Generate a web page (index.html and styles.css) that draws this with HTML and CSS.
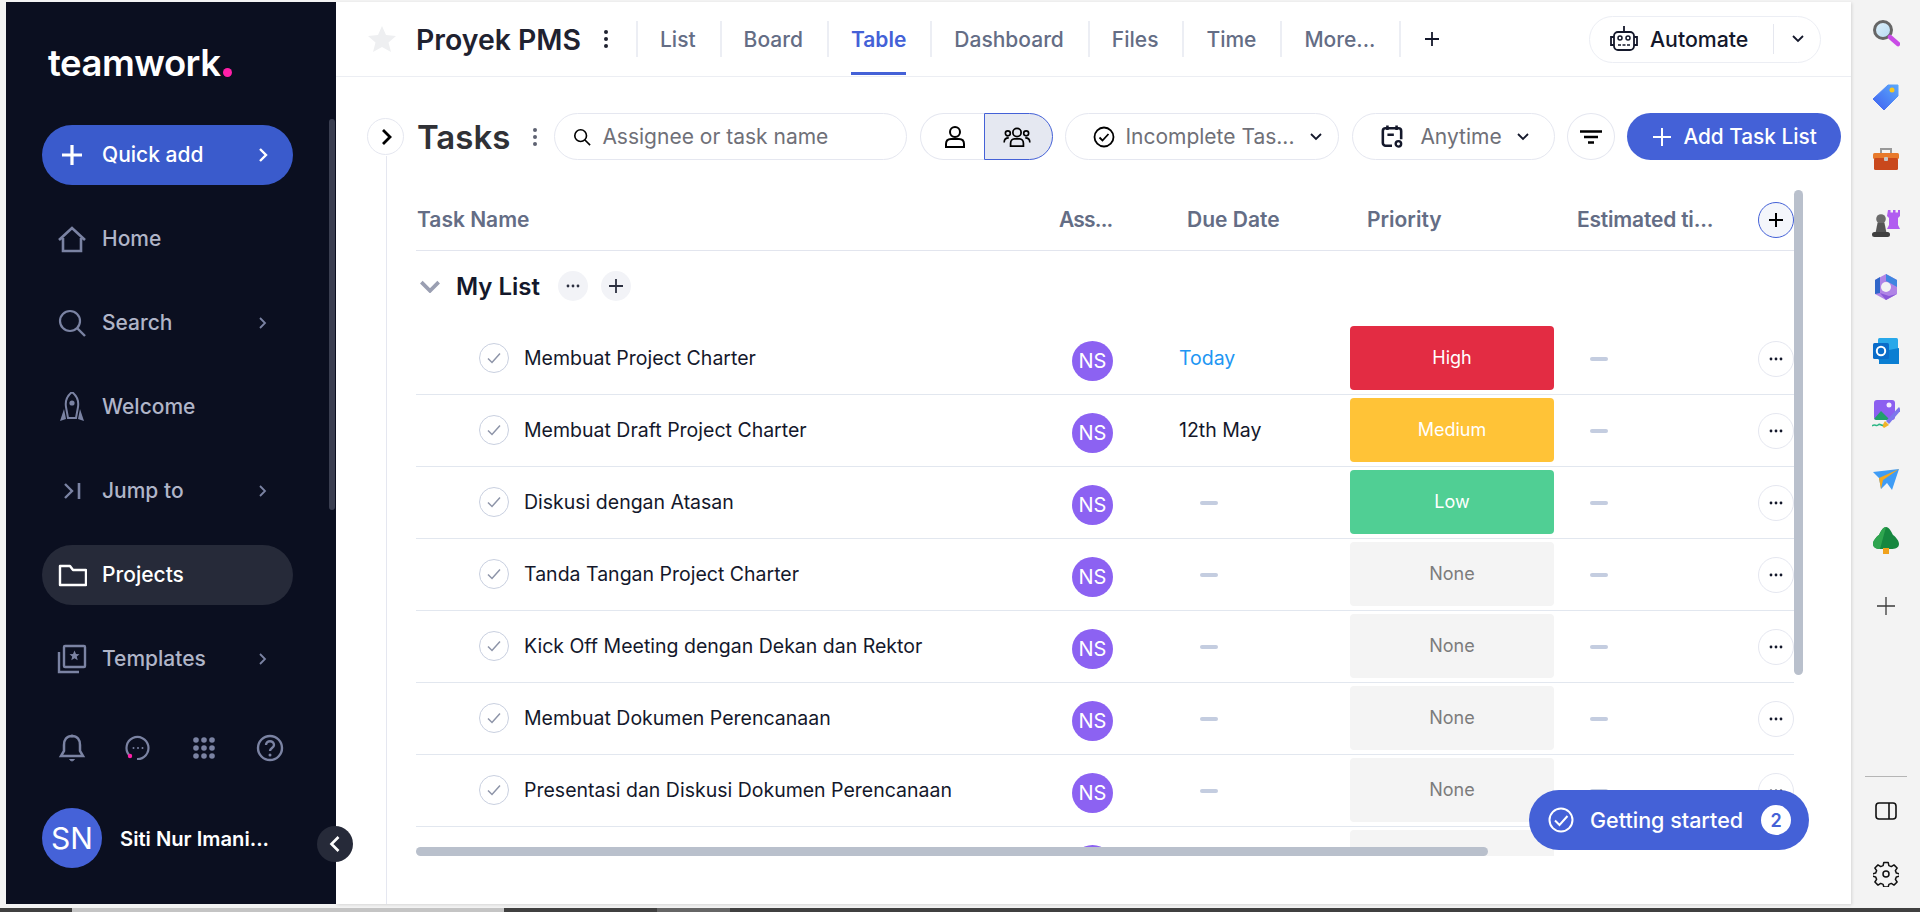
FILE: index.html
```html
<!DOCTYPE html>
<html lang="en">
<head>
<meta charset="utf-8">
<title>Proyek PMS - Table</title>
<link rel="stylesheet" href="styles.css">
</head>
<body>
<div class="app">
  <aside class="sidebar">
    <div class="logo">teamwork<span class="logo-dot"></span></div>
    <nav class="nav">
      <a class="nav-item quick">
        <svg class="nav-icon" viewBox="0 0 30 30"><path d="M15 5v20M5 15h20" stroke="#fff" stroke-width="3.2" fill="none"/></svg>
        <span class="nav-label">Quick add</span>
        <svg class="nav-chev" viewBox="0 0 12 16"><path d="M3 2l6 6-6 6" stroke="#fff" stroke-width="2.4" fill="none"/></svg>
      </a>
      <a class="nav-item">
        <svg class="nav-icon" viewBox="0 0 30 30"><path d="M2 16L15 4l13 12M6 14v13h18V14" stroke="#7b83a3" stroke-width="2.6" fill="none"/></svg>
        <span class="nav-label">Home</span>
      </a>
      <a class="nav-item">
        <svg class="nav-icon" viewBox="0 0 30 30"><circle cx="13" cy="13" r="10" stroke="#7b83a3" stroke-width="2.2" fill="none"/><path d="M20 20l8 8" stroke="#7b83a3" stroke-width="2.4" fill="none"/></svg>
        <span class="nav-label">Search</span>
        <svg class="nav-chev" viewBox="0 0 12 16"><path d="M3 3l5 5-5 5" stroke="#7b83a3" stroke-width="1.8" fill="none"/></svg>
      </a>
      <a class="nav-item">
        <svg class="nav-icon" viewBox="0 0 30 30"><path d="M15 0c5 4 7 9 6 15l-2 11h-8L9 15C8 9 10 4 15 0z" stroke="#7b83a3" stroke-width="2" fill="none"/><circle cx="15" cy="11" r="2.6" fill="#7b83a3"/><path d="M7 17L3 29l6-2zM23 17l4 12-6-2z" fill="#7b83a3"/></svg>
        <span class="nav-label">Welcome</span>
      </a>
      <a class="nav-item">
        <svg class="nav-icon" viewBox="0 0 30 30"><path d="M8 8l7 7-7 7" stroke="#7b83a3" stroke-width="2.4" fill="none"/><path d="M22 7v16" stroke="#7b83a3" stroke-width="2.6" fill="none"/></svg>
        <span class="nav-label">Jump to</span>
        <svg class="nav-chev" viewBox="0 0 12 16"><path d="M3 3l5 5-5 5" stroke="#7b83a3" stroke-width="1.8" fill="none"/></svg>
      </a>
      <a class="nav-item active">
        <svg class="nav-icon" viewBox="0 0 30 30"><path d="M3 6h10l3 4h13v15H3z" stroke="#fff" stroke-width="2.4" stroke-linejoin="round" fill="none"/></svg>
        <span class="nav-label">Projects</span>
      </a>
      <a class="nav-item">
        <svg class="nav-icon" viewBox="0 0 30 30"><rect x="7" y="2" width="21" height="21" rx="1" stroke="#7b83a3" stroke-width="2.4" fill="none"/><path d="M2 8v20h20" stroke="#7b83a3" stroke-width="2.4" fill="none"/><path d="M17.500 6.500l1.500 3.500 3.500.3-2.700 2.300.9 3.600-3.200-2-3.200 2 .9-3.600-2.700-2.300 3.500-.3z" fill="#7b83a3"/></svg>
        <span class="nav-label">Templates</span>
        <svg class="nav-chev" viewBox="0 0 12 16"><path d="M3 3l5 5-5 5" stroke="#7b83a3" stroke-width="1.8" fill="none"/></svg>
      </a>
    </nav>
    <div class="side-tools">
      <svg class="tool" viewBox="0 0 30 30"><path d="M15 3c-5.500 0-8 4-8 9v6l-3 5h22l-3-5v-6c0-5-2.500-9-8-9z" stroke="#7b83a3" stroke-width="2.500" fill="none"/><path d="M12.500 26c1 2.500 4 2.500 5 0" fill="#7b83a3" stroke="#7b83a3"/><circle cx="15" cy="3" r="1.500" fill="#7b83a3"/></svg>
      <svg class="tool" viewBox="0 0 30 30"><path d="M6 22A11 11 0 1 1 14 26" stroke="#7b83a3" stroke-width="2.200" fill="none"/><circle cx="10.500" cy="15" r="1" fill="#7b83a3"/><circle cx="15" cy="15" r="1" fill="#7b83a3"/><circle cx="19.500" cy="15" r="1" fill="#7b83a3"/><circle cx="7" cy="23" r="2.200" fill="#ff1fa8"/></svg>
      <svg class="tool" viewBox="0 0 30 30"><g fill="#7b83a3"><circle cx="7" cy="7" r="2.800"/><circle cx="15" cy="7" r="2.800"/><circle cx="23" cy="7" r="2.800"/><circle cx="7" cy="15" r="2.800"/><circle cx="15" cy="15" r="2.800"/><circle cx="23" cy="15" r="2.800"/><circle cx="7" cy="23" r="2.800"/><circle cx="15" cy="23" r="2.800"/><circle cx="23" cy="23" r="2.800"/></g></svg>
      <svg class="tool" viewBox="0 0 30 30"><circle cx="15" cy="15" r="12" stroke="#7b83a3" stroke-width="2.400" fill="none"/><path d="M11 12c0-5 8-5 8 0 0 3-4 3-4 6" stroke="#7b83a3" stroke-width="2.400" fill="none"/><circle cx="15" cy="22" r="1.500" fill="#7b83a3"/></svg>
    </div>
    <div class="profile">
      <span class="profile-avatar">SN</span>
      <span class="profile-name">Siti Nur Imani...</span>
    </div>
    <span class="side-scroll"></span>
    <span class="collapse"><svg viewBox="0 0 16 20" width="14" height="18"><path d="M12 2l-8 8 8 8" stroke="#fff" stroke-width="3" fill="none"/></svg></span>
  </aside>

  <main class="main">
    <header class="topbar">
      <svg class="star" viewBox="0 0 28 28"><path d="M14 1l4 9 10 1-7.500 6.500L23 27l-9-5-9 5 2.500-9.500L0 11l10-1z" fill="#eeeff1"/></svg>
      <h1 class="project-title">Proyek PMS</h1>
      <svg class="kebab" viewBox="0 0 6 20"><g fill="#1f2230"><circle cx="3" cy="3" r="2"/><circle cx="3" cy="10" r="2"/><circle cx="3" cy="17" r="2"/></g></svg>
      <div class="tabs">
        <a class="tab">List</a>
        <a class="tab">Board</a>
        <a class="tab active">Table</a>
        <a class="tab">Dashboard</a>
        <a class="tab">Files</a>
        <a class="tab">Time</a>
        <a class="tab tab-more">More...</a>
      </div>
      <svg class="tab-plus" viewBox="0 0 16 16"><path d="M8 1v14M1 8h14" stroke="#14182b" stroke-width="1.800" fill="none"/></svg>
      <div class="automate">
        <svg class="robot" viewBox="0 0 30 30"><rect x="5" y="8" width="20" height="18" rx="4" stroke="#14182b" stroke-width="1.800" fill="none"/><path d="M15 2v6M5 13H2v8h3M25 13h3v8h-3" stroke="#14182b" stroke-width="1.800" fill="none"/><circle cx="11" cy="14" r="2" stroke="#14182b" stroke-width="1.500" fill="none"/><circle cx="19" cy="14" r="2" stroke="#14182b" stroke-width="1.500" fill="none"/><path d="M9 21h3M13.500 21h3M18 21h3" stroke="#14182b" stroke-width="1.600"/></svg>
        <span class="automate-label">Automate</span>
        <span class="automate-sep"></span>
        <svg class="chev" viewBox="0 0 14 10"><path d="M2 2l5 5 5-5" stroke="#14182b" stroke-width="1.800" fill="none"/></svg>
      </div>
    </header>

    <section class="toolbar">
      <span class="side-toggle"><svg viewBox="0 0 12 18" width="12" height="18"><path d="M3 2l7 7-7 7" stroke="#000" stroke-width="2.800" fill="none"/></svg></span>
      <h2 class="tasks-title">Tasks</h2>
      <svg class="kebab small" viewBox="0 0 6 20"><g fill="#5e6272"><circle cx="3" cy="3" r="2"/><circle cx="3" cy="10" r="2"/><circle cx="3" cy="17" r="2"/></g></svg>
      <div class="pill search">
        <svg class="ic18" viewBox="0 0 20 20"><circle cx="8.500" cy="8.500" r="6.500" stroke="#000" stroke-width="1.800" fill="none"/><path d="M13 13l6 6" stroke="#000" stroke-width="1.800"/></svg>
        <span class="placeholder">Assignee or task name</span>
      </div>
      <div class="toggle">
        <span class="toggle-a"><svg viewBox="0 0 24 24" width="24" height="24"><circle cx="12" cy="7" r="5" stroke="#000" stroke-width="2" fill="none"/><path d="M3 22v-3c0-3 2-5 5-5h8c3 0 5 2 5 5v3z" stroke="#000" stroke-width="2" fill="none"/></svg></span>
        <span class="toggle-b"><svg viewBox="0 0 30 24" width="28" height="22"><circle cx="15" cy="7" r="4.500" stroke="#000" stroke-width="1.900" fill="none"/><circle cx="5" cy="8" r="2.700" stroke="#000" stroke-width="1.800" fill="none"/><circle cx="25" cy="8" r="2.700" stroke="#000" stroke-width="1.800" fill="none"/><path d="M8 22v-3c0-3 2-5 4-5h6c2 0 4 2 4 5v3z" stroke="#000" stroke-width="1.900" fill="none"/><path d="M1 18c0-3 2-5 5-5M29 18c0-3-2-5-5-5" stroke="#000" stroke-width="1.800" fill="none"/></svg></span>
      </div>
      <div class="pill filter">
        <svg class="ic22" viewBox="0 0 22 22"><circle cx="11" cy="11" r="9.500" stroke="#000" stroke-width="1.800" fill="none"/><path d="M6.500 11.500l3 3 6-6.500" stroke="#000" stroke-width="1.800" fill="none"/></svg>
        <span class="pill-text">Incomplete Tas...</span>
        <svg class="chev" viewBox="0 0 14 10"><path d="M2 2l5 5 5-5" stroke="#14182b" stroke-width="1.800" fill="none"/></svg>
      </div>
      <div class="pill anytime">
        <svg class="ic24" viewBox="0 0 24 26"><path d="M12 23H5a3 3 0 0 1-3-3V7a3 3 0 0 1 3-3h14a3 3 0 0 1 3 3v9" stroke="#14182b" stroke-width="2.800" fill="none"/><path d="M7 1v5M17 1v5M7 11h7" stroke="#14182b" stroke-width="2.800" fill="none"/><circle cx="19" cy="21" r="3" stroke="#14182b" stroke-width="2.600" fill="none"/></svg>
        <span class="pill-text">Anytime</span>
        <svg class="chev" viewBox="0 0 14 10"><path d="M2 2l5 5 5-5" stroke="#14182b" stroke-width="1.800" fill="none"/></svg>
      </div>
      <span class="filter-btn"><svg viewBox="0 0 22 14" width="22" height="14"><path d="M0 1.500h22M4 7h14M8 12.500h6" stroke="#000" stroke-width="2.400"/></svg></span>
      <a class="add-list"><svg viewBox="0 0 18 18" width="18" height="18"><path d="M9 0v18M0 9h18" stroke="#fff" stroke-width="2"/></svg>Add Task List</a>
    </section>

    <section class="content">
      <div class="table-wrap">
        <div class="table">
          <div class="thead">
            <span class="th th-name">Task Name</span>
            <span class="th th-ass">Ass...</span>
            <span class="th th-due">Due Date</span>
            <span class="th th-pri">Priority</span>
            <span class="th th-est">Estimated ti...</span>
            <span class="add-col"><svg viewBox="0 0 16 16" width="16" height="16"><path d="M8 1v14M1 8h14" stroke="#000" stroke-width="2"/></svg></span>
          </div>
          <div class="group">
            <svg class="group-chev" viewBox="0 0 20 12"><path d="M2 2l8 8 8-8" stroke="#9a9fb2" stroke-width="3.400" fill="none"/></svg>
            <span class="group-name">My List</span>
            <span class="group-btn"><svg viewBox="0 0 14 4" width="14" height="4"><g fill="#2c3040"><circle cx="2" cy="2" r="1.400"/><circle cx="7" cy="2" r="1.400"/><circle cx="12" cy="2" r="1.400"/></g></svg></span>
            <span class="group-btn"><svg viewBox="0 0 16 16" width="16" height="16"><path d="M8 1v14M1 8h14" stroke="#2c3040" stroke-width="1.800"/></svg></span>
          </div>

          <div class="row">
            <div class="task"><span class="check"><svg viewBox="0 0 14 12" width="14" height="12"><path d="M1 6.500l4 4 8-9" stroke="#8d94a8" stroke-width="1.500" fill="none"/></svg></span><span class="task-name">Membuat Project Charter</span></div>
            <div class="assignee"><span class="avatar">NS</span></div>
            <div class="due today">Today</div>
            <div class="priority high">High</div>
            <div class="estimate"><span class="dash"></span></div>
            <span class="dots"><svg viewBox="0 0 14 4" width="14" height="4"><g fill="#14182b"><circle cx="2" cy="2" r="1.400"/><circle cx="7" cy="2" r="1.400"/><circle cx="12" cy="2" r="1.400"/></g></svg></span>
          </div>
          <div class="row">
            <div class="task"><span class="check"><svg viewBox="0 0 14 12" width="14" height="12"><path d="M1 6.500l4 4 8-9" stroke="#8d94a8" stroke-width="1.500" fill="none"/></svg></span><span class="task-name">Membuat Draft Project Charter</span></div>
            <div class="assignee"><span class="avatar">NS</span></div>
            <div class="due">12th May</div>
            <div class="priority medium">Medium</div>
            <div class="estimate"><span class="dash"></span></div>
            <span class="dots"><svg viewBox="0 0 14 4" width="14" height="4"><g fill="#14182b"><circle cx="2" cy="2" r="1.400"/><circle cx="7" cy="2" r="1.400"/><circle cx="12" cy="2" r="1.400"/></g></svg></span>
          </div>
          <div class="row">
            <div class="task"><span class="check"><svg viewBox="0 0 14 12" width="14" height="12"><path d="M1 6.500l4 4 8-9" stroke="#8d94a8" stroke-width="1.500" fill="none"/></svg></span><span class="task-name">Diskusi dengan Atasan</span></div>
            <div class="assignee"><span class="avatar">NS</span></div>
            <div class="due empty"><span class="dash"></span></div>
            <div class="priority low">Low</div>
            <div class="estimate"><span class="dash"></span></div>
            <span class="dots"><svg viewBox="0 0 14 4" width="14" height="4"><g fill="#14182b"><circle cx="2" cy="2" r="1.400"/><circle cx="7" cy="2" r="1.400"/><circle cx="12" cy="2" r="1.400"/></g></svg></span>
          </div>
          <div class="row">
            <div class="task"><span class="check"><svg viewBox="0 0 14 12" width="14" height="12"><path d="M1 6.500l4 4 8-9" stroke="#8d94a8" stroke-width="1.500" fill="none"/></svg></span><span class="task-name">Tanda Tangan Project Charter</span></div>
            <div class="assignee"><span class="avatar">NS</span></div>
            <div class="due empty"><span class="dash"></span></div>
            <div class="priority none">None</div>
            <div class="estimate"><span class="dash"></span></div>
            <span class="dots"><svg viewBox="0 0 14 4" width="14" height="4"><g fill="#14182b"><circle cx="2" cy="2" r="1.400"/><circle cx="7" cy="2" r="1.400"/><circle cx="12" cy="2" r="1.400"/></g></svg></span>
          </div>
          <div class="row">
            <div class="task"><span class="check"><svg viewBox="0 0 14 12" width="14" height="12"><path d="M1 6.500l4 4 8-9" stroke="#8d94a8" stroke-width="1.500" fill="none"/></svg></span><span class="task-name">Kick Off Meeting dengan Dekan dan Rektor</span></div>
            <div class="assignee"><span class="avatar">NS</span></div>
            <div class="due empty"><span class="dash"></span></div>
            <div class="priority none">None</div>
            <div class="estimate"><span class="dash"></span></div>
            <span class="dots"><svg viewBox="0 0 14 4" width="14" height="4"><g fill="#14182b"><circle cx="2" cy="2" r="1.400"/><circle cx="7" cy="2" r="1.400"/><circle cx="12" cy="2" r="1.400"/></g></svg></span>
          </div>
          <div class="row">
            <div class="task"><span class="check"><svg viewBox="0 0 14 12" width="14" height="12"><path d="M1 6.500l4 4 8-9" stroke="#8d94a8" stroke-width="1.500" fill="none"/></svg></span><span class="task-name">Membuat Dokumen Perencanaan</span></div>
            <div class="assignee"><span class="avatar">NS</span></div>
            <div class="due empty"><span class="dash"></span></div>
            <div class="priority none">None</div>
            <div class="estimate"><span class="dash"></span></div>
            <span class="dots"><svg viewBox="0 0 14 4" width="14" height="4"><g fill="#14182b"><circle cx="2" cy="2" r="1.400"/><circle cx="7" cy="2" r="1.400"/><circle cx="12" cy="2" r="1.400"/></g></svg></span>
          </div>
          <div class="row">
            <div class="task"><span class="check"><svg viewBox="0 0 14 12" width="14" height="12"><path d="M1 6.500l4 4 8-9" stroke="#8d94a8" stroke-width="1.500" fill="none"/></svg></span><span class="task-name">Presentasi dan Diskusi Dokumen Perencanaan</span></div>
            <div class="assignee"><span class="avatar">NS</span></div>
            <div class="due empty"><span class="dash"></span></div>
            <div class="priority none">None</div>
            <div class="estimate"><span class="dash"></span></div>
            <span class="dots"><svg viewBox="0 0 14 4" width="14" height="4"><g fill="#14182b"><circle cx="2" cy="2" r="1.400"/><circle cx="7" cy="2" r="1.400"/><circle cx="12" cy="2" r="1.400"/></g></svg></span>
          </div>
          <div class="row">
            <div class="task"><span class="check"></span></div>
            <div class="assignee"><span class="avatar"></span></div>
            <div class="due empty"></div>
            <div class="priority none"></div>
            <div class="estimate"></div>
          </div>
        </div>
        <span class="h-scroll"></span>
        <span class="v-scroll"></span>
      </div>
    </section>

    <div class="toast">
      <svg viewBox="0 0 26 26" width="26" height="26"><circle cx="13" cy="13" r="11.500" stroke="#fff" stroke-width="2" fill="none"/><path d="M7 13.500l4.500 4.500 8-9" stroke="#fff" stroke-width="2" fill="none"/></svg>
      <span class="toast-text">Getting started</span>
      <span class="toast-badge">2</span>
    </div>
  </main>

  <aside class="rail">
    <svg class="rail-icon" viewBox="0 0 28 28"><defs><linearGradient id="gl" x1="0" y1="0" x2="1" y2="1"><stop offset="0" stop-color="#dff1fb"/><stop offset="1" stop-color="#b5d9f2"/></linearGradient></defs><circle cx="11" cy="11" r="8.500" fill="url(#gl)" stroke="#666" stroke-width="3"/><path d="M18 18l8 7" stroke="#c94be6" stroke-width="4.500" stroke-linecap="round"/></svg>
    <svg class="rail-icon" viewBox="0 0 28 28"><defs><linearGradient id="gt" x1="0" y1="1" x2="1" y2="0"><stop offset="0" stop-color="#3f5ff0"/><stop offset="1" stop-color="#5aa8fb"/></linearGradient></defs><path d="M1 16L16 2h10v11L12 27z" fill="url(#gt)" stroke="url(#gt)" stroke-width="1" stroke-linejoin="round"/><circle cx="20" cy="7" r="2.500" fill="#f7c81e"/></svg>
    <svg class="rail-icon" viewBox="0 0 28 28"><path d="M9 7V3h10v4" stroke="#999" stroke-width="2" fill="none"/><rect x="1" y="7" width="26" height="6" rx="1.500" fill="#e87a2c"/><rect x="2" y="12" width="24" height="12" rx="1.500" fill="#c9481c"/><rect x="12" y="11" width="4" height="4" rx="1" fill="#c7c7c7"/></svg>
    <svg class="rail-icon" viewBox="0 0 28 28"><path d="M16 0h2.500v2.500H21V0h2.500v2.500H26V0h2v6l-2 2v7l2 4H15l2-4V8l-2-2z" fill="#b15cf0"/><circle cx="9" cy="9" r="4.800" fill="#6b6b6b"/><path d="M5.500 13h7l2 10h-11z" fill="#555"/><rect x="0" y="22" width="18" height="5" rx="2.500" fill="#3f3f3f"/></svg>
    <svg class="rail-icon" viewBox="0 0 28 28"><path d="M14 1l11 6v14l-11 6L3 21V7z" fill="#b084e6"/><path d="M14 1l11 6v7l-7-4-4-2z" fill="#3f86e0"/><path d="M3 7l5-3v16l-5 1z" fill="#3066c9"/><path d="M8 20l9 3 8-2-11 6z" fill="#8a58d8"/><circle cx="14" cy="14" r="5" fill="#f3f3f3"/></svg>
    <svg class="rail-icon" viewBox="0 0 28 28"><rect x="6" y="1" width="20" height="22" rx="1.500" fill="#28a8ea"/><path d="M27 11v16H7V15z" fill="#0a7ed2"/><rect x="1" y="6" width="16" height="16" rx="1.500" fill="#0a6cc9"/><circle cx="9" cy="14" r="4.200" stroke="#fff" stroke-width="2" fill="none"/></svg>
    <svg class="rail-icon" viewBox="0 0 28 28"><rect x="2" y="0" width="21" height="20" rx="3" fill="#8c5ff0"/><circle cx="17" cy="5" r="2.500" fill="#f4ecff"/><path d="M2 19l7-8 9 9H4z" fill="#21a06b"/><path d="M27 7L14 21l3 3L29 10z" fill="#7d76ec"/><path d="M13 21l4 4-5 3-2-2z" fill="#f0b429"/><path d="M0 26c3-3 4 1 6-1s3 1 5 0" stroke="#2bb785" stroke-width="1.500" fill="none"/></svg>
    <svg class="rail-icon" viewBox="0 0 28 28"><path d="M27 5L1 8l6 6 2 11 6-6 5 7z" fill="#3f9cf5"/><path d="M27 5L7 14l2 11 2-9z" fill="#f5a81c"/></svg>
    <svg class="rail-icon" viewBox="0 0 28 28"><path d="M14 0c3 0 5 4 7 8 3 2 6 6 6 9 0 4-4 5-8 5H9c-4 0-8-1-8-5 0-3 3-7 6-9 2-4 4-8 7-8z" fill="#16873f"/><path d="M14 0c-3 0-5 4-7 8-3 2-6 6-6 9 0 3 3 5 7 5" fill="#2fa54f"/><rect x="11" y="21" width="6" height="6" fill="#f0a21c"/></svg>
    <svg class="rail-plus" viewBox="0 0 18 18"><path d="M9 0v18M0 9h18" stroke="#3a3a3a" stroke-width="1.300"/></svg>
    <div class="rail-bottom">
      <span class="rail-sep"></span>
      <svg class="rail-tool" viewBox="0 0 22 18"><rect x="1" y="1" width="20" height="16" rx="3" stroke="#111" stroke-width="1.600" fill="none"/><path d="M14 1v16" stroke="#111" stroke-width="1.600"/></svg>
      <svg class="rail-gear" viewBox="0 0 26 26"><circle cx="13" cy="13" r="3" stroke="#111" stroke-width="1.500" fill="none"/><path d="M10.800 1.500h4.400l.7 3.100 2.400 1 2.700-1.700 3.100 3.100-1.700 2.700 1 2.400 3.100.7v2.400l-3.100.7-1 2.400 1.700 2.700-3.100 3.100-2.700-1.700-2.400 1-.7 2.600h-4.400l-.7-2.600-2.400-1-2.700 1.700-3.100-3.100 1.700-2.700-1-2.400-3.100-.7v-2.400l3.100-.7 1-2.400-1.700-2.700 3.100-3.100 2.700 1.700 2.400-1z" stroke="#111" stroke-width="1.500" stroke-linejoin="round" fill="none"/></svg>
    </div>
  </aside>
</div>
<div class="taskbar">
  <span class="tb-a"></span><span class="tb-b"></span><span class="tb-c"></span><span class="tb-d"></span><span class="tb-e"></span>
</div>
</body>
</html>
```

FILE: styles.css
```css
* { box-sizing: border-box; }
html, body { margin: 0; height: 912px; overflow: hidden; }
body { background: #f3f3f3; font-family: "Inter", "Liberation Sans", sans-serif; color: #14182b; }
h1, h2 { margin: 0; }
svg { display: block; flex: none; }

.app { display: flex; height: 908px; padding: 2px 0 4px 6px; }

/* sidebar */
.sidebar { position: relative; width: 330px; height: 902px; background: #0b0f20; padding: 46px 0 0 36px; flex: none; z-index: 2; }
.logo { display: flex; align-items: flex-end; height: 30px; margin-left: 6px; font-size: 36.500px; font-weight: 600; line-height: 30px; color: #fff; letter-spacing: -0.5px; }
.logo-dot { width: 9px; height: 9px; border-radius: 50%; background: #ff1fa8; margin: 0 0 1px 3px; }
.nav { display: flex; flex-direction: column; gap: 24px; margin-top: 47px; width: 251px; }
.nav-item { display: flex; align-items: center; height: 60px; border-radius: 30px; padding: 0 24px 0 15px; color: #b0b5c8; font-size: 21px; font-weight: 500; }
.nav-icon { width: 30px; height: 30px; }
.nav-label { flex: 1; margin-left: 15px; padding-bottom: 2px; }
.nav-chev { width: 12px; height: 16px; }
.quick { background: #3a5bcc; color: #fff; }
.active { background: #262a39; color: #fff; }
.side-tools { display: flex; gap: 36px; padding-left: 15px; margin-top: 44px; }
.tool { width: 30px; height: 30px; }
.profile { display: flex; align-items: center; margin-top: 45px; }
.profile-avatar { display: flex; align-items: center; justify-content: center; width: 60px; height: 60px; border-radius: 50%; background: #4562d8; color: #fff; font-size: 30px; }
.profile-name { margin-left: 18px; color: #fff; font-size: 20.200px; font-weight: 600; }
.side-scroll { position: absolute; right: 1px; top: 117px; width: 6px; height: 391px; border-radius: 3px; background: #3a3e50; }
.collapse { position: absolute; right: -17px; bottom: 42px; width: 36px; height: 36px; border-radius: 50%; background: #262a39; display: flex; align-items: center; justify-content: center; }

/* main */
.main { position: relative; width: 1515px; height: 902px; background: #fff; flex: none; box-shadow: 1px 1px 3px rgba(0,0,0,.12); }
.topbar { display: flex; align-items: center; height: 75px; border-bottom: 1px solid #eceef3; padding-left: 32px; }
.star { width: 28px; height: 28px; }
.project-title { margin-left: 20px; font-size: 28.400px; font-weight: 600; color: #1f2230; white-space: nowrap; }
.kebab { width: 6px; height: 20px; margin-left: 22px; }
.tabs { display: flex; margin-left: 27px; }
.tab { position: relative; display: flex; align-items: center; height: 36px; border-left: 2px solid #eceef4; padding: 0 24px 0 22px; color: #646d85; font-size: 21px; font-weight: 500; white-space: nowrap; }
.tab-more { border-right: 2px solid #eceef4; }
.tab.active { color: #4461d7; font-weight: 600; background: none; }
.tab.active::after { content: ""; position: absolute; left: 22px; right: 24px; bottom: -18px; height: 3px; background: #4461d7; }
.tab-plus { width: 16px; height: 16px; margin-left: 23px; }
.automate { display: flex; align-items: center; width: 232px; height: 47px; margin-left: auto; margin-right: 30px; border: 1px solid #eceef4; border-radius: 24px; padding-left: 19px; font-size: 21.300px; font-weight: 500; }
.robot { width: 30px; height: 30px; }
.automate-label { margin-left: 11px; color: #14182b; }
.automate-sep { width: 1px; height: 30px; background: #e5e7ef; margin-left: 25px; }
.chev { width: 14px; height: 10px; }
.automate .chev { margin-left: 17px; }

.toolbar { display: flex; align-items: center; height: 47px; margin-top: 36px; padding-left: 31px; }
.side-toggle { display: flex; align-items: center; justify-content: center; width: 37px; height: 37px; border: 1px solid #e5e7f0; border-radius: 50%; background: #fff; }
.tasks-title { margin-left: 13px; font-size: 33px; font-weight: 600; color: #303136; }
.pill { display: flex; align-items: center; height: 47px; border: 1px solid #e5e7f0; border-radius: 24px; font-size: 21px; color: #6f7078; white-space: nowrap; }
.search { width: 353px; padding-left: 18px; margin-left: 16px; }
.ic18 { width: 18px; height: 18px; }
.ic22 { width: 22px; height: 22px; }
.ic24 { width: 22px; height: 25px; }
.placeholder { margin-left: 11px; }
.toggle { display: flex; width: 133px; height: 47px; margin-left: 13px; }
.toggle-a { display: flex; align-items: center; justify-content: center; width: 64px; padding-left: 4px; border: 1px solid #e5e7f0; border-right: 0; border-radius: 24px 0 0 24px; }
.toggle-b { display: flex; align-items: center; justify-content: center; width: 69px; padding-right: 4px; border: 1px solid #4461d7; border-radius: 0 24px 24px 0; background: #e5e8f1; }
.filter { width: 274px; margin-left: 12px; padding-left: 27px; }
.pill-text { margin-left: 10px; }
.filter .chev { margin-left: 15px; }
.anytime { width: 203px; margin-left: 13px; padding-left: 28px; }
.anytime .pill-text { margin-left: 17px; }
.anytime .chev { margin-left: 14px; }
.filter-btn { display: flex; align-items: center; justify-content: center; width: 48px; height: 47px; margin-left: 12px; border: 1px solid #e5e7f0; border-radius: 50%; }
.add-list { display: flex; align-items: center; gap: 12px; width: 214px; height: 47px; margin-left: 12px; padding-left: 26px; border-radius: 24px; background: #4461d7; color: #fff; font-size: 20.800px; font-weight: 500; white-space: nowrap; }

/* table */
.content { height: 748px; margin: -4px 0 0 50px; border-left: 1px solid #e5e7f0; padding: 34px 0 0 29px; }
.table-wrap { position: relative; width: 1387px; height: 666px; overflow: hidden; }
.table { width: 1378px; }
.thead { display: grid; grid-template-columns: 624px 120px 180px 215px 203px 36px; align-items: center; height: 61px; border-bottom: 1px solid #e2e5ee; }
.th { padding-bottom: 2px; color: #646d85; font-size: 21px; font-weight: 600; white-space: nowrap; }
.th-name { padding-left: 1px; }
.th-ass { padding-left: 19px; letter-spacing: -0.800px; }
.th-due { padding-left: 27px; }
.th-pri { padding-left: 27px; }
.th-est { padding-left: 22px; letter-spacing: -0.200px; }
.add-col { display: flex; align-items: center; justify-content: center; width: 36px; height: 36px; border: 1px solid #4461d7; border-radius: 50%; background: #f4f6fb; }
.group { display: flex; align-items: center; height: 72px; padding: 0 0 2px 3px; }
.group-chev { width: 22px; height: 13px; }
.group-name { margin: 0 18px 0 15px; font-size: 24px; font-weight: 600; color: #14182b; }
.group-btn { display: flex; align-items: center; justify-content: center; width: 30px; height: 30px; margin-right: 13px; border-radius: 50%; background: #f2f3f7; }
.row { display: grid; grid-template-columns: 624px 120px 180px 215px 203px 36px; align-items: center; height: 72px; padding-bottom: 2px; border-bottom: 1px solid #e2e7ef; font-size: 19.500px; }
.task { display: flex; align-items: center; padding-left: 63px; }
.check { display: flex; align-items: center; justify-content: center; width: 30px; height: 30px; border: 1px solid #c9d0e0; border-radius: 50%; }
.task-name { margin-left: 15px; color: #14182b; white-space: nowrap; }
.assignee { padding-left: 32px; }
.avatar { display: flex; align-items: center; justify-content: center; width: 41px; height: 40px; margin-top: 7px; border-radius: 50%; background: #8c62f2; color: #fff; font-size: 20px; }
.due { padding-left: 19px; color: #14182b; }
.today { color: #2196f3; }
.empty { padding-left: 40px; }
.dash { display: block; width: 18px; height: 4px; margin-top: 2px; border-radius: 2px; background: #c4cde0; }
.priority { display: flex; align-items: center; justify-content: center; align-self: start; height: 64px; margin: 3px 1px 0 10px; padding-bottom: 2px; border-radius: 4px; color: #fff; font-size: 18px; }
.high { background: #e32c43; }
.medium { background: #ffc337; }
.low { background: #50cf94; }
.none { background: #f4f4f4; color: #7c7c7c; }
.estimate { padding-left: 35px; }
.dots { display: flex; align-items: center; justify-content: center; width: 36px; height: 36px; margin-top: 2px; border: 1px solid #e5e7f0; border-radius: 50%; background: #fff; }
.h-scroll { position: absolute; left: 0; bottom: 0; width: 1072px; height: 9px; border-radius: 5px; background: #b9c0cc; }
.v-scroll { position: absolute; right: 0; top: 0; width: 9px; height: 485px; border-radius: 5px; background: #b9c0cc; }

.toast { position: absolute; right: 42px; bottom: 54px; display: flex; align-items: center; width: 280px; height: 60px; padding-left: 19px; border-radius: 30px; background: #4461d7; color: #fff; font-size: 21.500px; font-weight: 500; }
.toast-text { margin-left: 16px; white-space: nowrap; }
.toast-badge { display: flex; align-items: center; justify-content: center; width: 30px; height: 30px; margin-left: 18px; border-radius: 50%; background: #fff; color: #4461d7; font-size: 18px; font-weight: 600; }

/* right rail */
.rail { display: flex; flex-direction: column; align-items: center; width: 69px; height: 902px; padding: 17px 0; }
.rail-icon { width: 28px; height: 28px; margin-bottom: 35.500px; }
.rail-plus { width: 18px; height: 18px; margin-top: 6px; }
.rail-bottom { display: flex; flex-direction: column; align-items: center; margin-top: auto; }
.rail-sep { width: 42px; height: 1px; background: #b5b5b5; }
.rail-tool { width: 22px; height: 18px; margin-top: 25px; }
.rail-gear { width: 26px; height: 26px; margin-top: 41px; }

.taskbar { display: flex; height: 4px; background: #404040; }
.tb-a { width: 72px; background: #404040; }
.tb-b { width: 432px; background: #c4c4c4; }
.tb-c { width: 153px; background: #404040; }
.tb-d { width: 73px; background: #666; }
.tb-e { flex: 1; background: #404040; }
```
